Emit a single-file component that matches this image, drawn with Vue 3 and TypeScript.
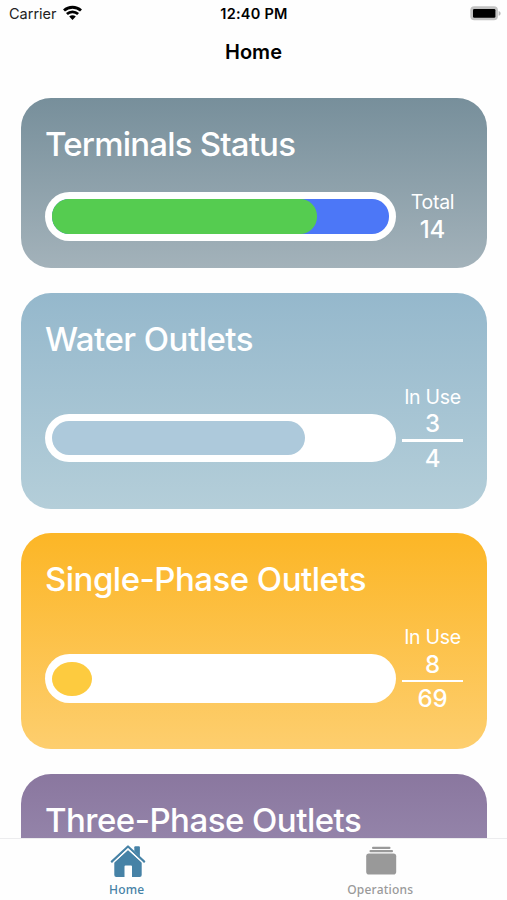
<script setup lang="ts">
interface Stat {
  label: string
  value: number
  total?: number
  fill: number
}

interface Card {
  id: string
  title: string
  stat?: Stat
}

const cards: Card[] = [
  { id: 'terminals', title: 'Terminals Status', stat: { label: 'Total', value: 14, fill: 78.6 } },
  { id: 'water', title: 'Water Outlets', stat: { label: 'In Use', value: 3, total: 4, fill: 75 } },
  { id: 'single', title: 'Single-Phase Outlets', stat: { label: 'In Use', value: 8, total: 69, fill: 11.7 } },
  { id: 'three', title: 'Three-Phase Outlets' },
]
</script>

<template>
  <div class="screen">
    <header class="status">
      <div class="carrier">
        <span class="carrier-name">Carrier</span>
        <svg class="wifi" width="19" height="15" viewBox="0 0 19 15">
          <g fill="none" stroke="#000" stroke-width="2.8">
            <path d="M1 5.600C5.800 1.100 13.200 1.100 18 5.600" />
            <path d="M3.900 9c3.200-2.900 8-2.900 11.200 0" />
          </g>
          <path d="M6.200 11.500c1.900-1.700 4.700-1.700 6.600 0L9.500 14.900z" />
        </svg>
      </div>
      <span class="time">12:40 PM</span>
      <svg class="battery" width="32" height="15" viewBox="0 0 32 15">
        <rect x=".3" y=".3" width="27.600" height="14" rx="4" fill="#c2c2c2" />
        <rect x="3" y="3" width="22.400" height="8.800" rx="1.300" />
        <path d="M28.600 4.900c2.700.8 2.700 4 0 4.800z" fill="#b8b8b8" />
      </svg>
    </header>
    <h1 class="nav-title">Home</h1>

    <main class="cards">
      <section v-for="card in cards" :key="card.id" class="card" :class="card.id">
        <h2>{{ card.title }}</h2>
        <div v-if="card.stat" class="body">
          <div class="bar">
            <div class="track">
              <div class="fill" :style="{ width: card.stat.fill + '%' }"></div>
            </div>
          </div>
          <div class="stat">
            <span class="label">{{ card.stat.label }}</span>
            <span class="number">{{ card.stat.value }}</span>
            <template v-if="card.stat.total">
              <span class="rule"></span>
              <span class="number">{{ card.stat.total }}</span>
            </template>
          </div>
        </div>
      </section>
    </main>

    <nav class="tabs">
      <div class="tab active">
        <svg width="36" height="35" viewBox="0 0 36 35" fill="currentColor">
          <path d="M4.300 18.300 18 6l13.700 12.300V31a2 2 0 0 1-2 2H22V22.500a1 1 0 0 0-1-1h-5.500a1 1 0 0 0-1 1V33H6.300a2 2 0 0 1-2-2z" />
          <path d="M24.300 7V3.300a1 1 0 0 1 1-1h3.600a1 1 0 0 1 1 1v9.300z" />
          <path d="M1.800 17.600 18 2.500l16.200 15.100" fill="none" stroke="currentColor" stroke-width="2.200" stroke-linecap="round" stroke-linejoin="round" />
          <path d="M3.400 18.600 18 5l14.600 13.600" fill="none" stroke="#fefefe" stroke-width="1.200" />
        </svg>
        <span>Home</span>
      </div>
      <div class="tab operations">
        <svg width="36" height="35" viewBox="0 0 36 35" fill="currentColor">
          <rect x="3.200" y="9.500" width="30" height="21" rx="2.800" />
          <rect x="6.500" y="6" width="23.500" height="2.300" rx="1" />
          <rect x="9" y="2.700" width="18.500" height="2.200" rx="1" />
        </svg>
        <span>Operations</span>
      </div>
    </nav>
  </div>
</template>

<style>
body {
  margin: 0;
  overflow: hidden;
  background: #fff;
}
</style>

<style scoped>
.screen {
  box-sizing: border-box;
  display: flex;
  flex-direction: column;
  width: 507px;
  height: 900px;
  overflow: hidden;
  background: #fefefe;
  color: #000;
  font-family: Inter, "Liberation Sans", sans-serif;
}
.status {
  display: grid;
  grid-template-columns: 1fr auto 1fr;
  align-items: center;
  box-sizing: border-box;
  height: 28px;
  padding: 0 5px 2px 9px;
  flex: none;
}
.carrier {
  display: flex;
  align-items: center;
  gap: 6px;
}
.carrier-name {
  font-size: 14.500px;
  color: #222;
}
.wifi {
  margin-top: -2px;
}
.time {
  margin-right: 3px;
  font-size: 14.500px;
  font-weight: 600;
  letter-spacing: 0.25px;
}
.battery {
  justify-self: end;
}
.nav-title {
  flex: none;
  height: 70.200px;
  margin: 0;
  line-height: 49px;
  text-align: center;
  font-size: 20px;
  font-weight: 600;
}
.cards {
  flex: 1;
  min-height: 0;
  display: flex;
  flex-direction: column;
  gap: 24.500px;
  padding: 0 20px 0 20.500px;
  overflow: hidden;
}
.card {
  box-sizing: border-box;
  flex: none;
  height: 216px;
  padding: 26px 0 0 24.500px;
  border-radius: 30px;
  color: #fff;
}
.terminals { height: 170px; background: linear-gradient(#778f9b, #a3b2ba); }
.water { background: linear-gradient(#95b8cc, #b4ced9); }
.single { background: linear-gradient(#fcb626, #fdce6e); }
.three { background: linear-gradient(#8a779f, #aaa0c0); }
h2 {
  margin: 0 0 26px;
  font-size: 33px;
  line-height: 40px;
  font-weight: 500;
  letter-spacing: -0.52px;
  white-space: nowrap;
}
.terminals h2 {
  letter-spacing: -0.8px;
}
.body {
  display: flex;
  align-items: flex-start;
  gap: 6px;
}
.bar {
  box-sizing: border-box;
  flex: none;
  width: 351px;
  height: 48.500px;
  margin-top: 29.200px;
  padding: 7.200px;
  border-radius: 25px;
  background: #fff;
}
.terminals .bar { margin-top: 2.100px; }
.track, .fill {
  height: 100%;
  border-radius: 17px;
}
.terminals .track { background: #4c77f7; }
.terminals .fill { background: #55cc50; }
.water .fill { background: #adc9db; }
.single .fill { background: #fdcb3f; border-radius: 50%; }
.stat {
  display: flex;
  flex-direction: column;
  align-items: center;
  flex: none;
  width: 61px;
}
.label {
  font-size: 19.500px;
  line-height: 24.500px;
  letter-spacing: -0.3px;
  white-space: nowrap;
}
.number {
  font-size: 24px;
  line-height: 30px;
  font-weight: 500;
}
.rule {
  width: 61px;
  height: 2.500px;
  margin-bottom: 2px;
  background: #fff;
}
.tabs {
  box-sizing: border-box;
  flex: none;
  display: grid;
  grid-template-columns: 1fr 1fr;
  height: 62px;
  padding-top: 4.500px;
  border-top: 1px solid #ececee;
  background: #fefefe;
}
.tab {
  display: flex;
  flex-direction: column;
  align-items: center;
  gap: 3px;
  color: #999;
  font: 500 12px/16px "Noto Sans", sans-serif;
  letter-spacing: 0.2px;
}
.tab svg {
  margin-left: 1px;
}
.tab.active {
  color: #4682a6;
}
.tab.active svg {
  margin-left: 2px;
}
</style>
